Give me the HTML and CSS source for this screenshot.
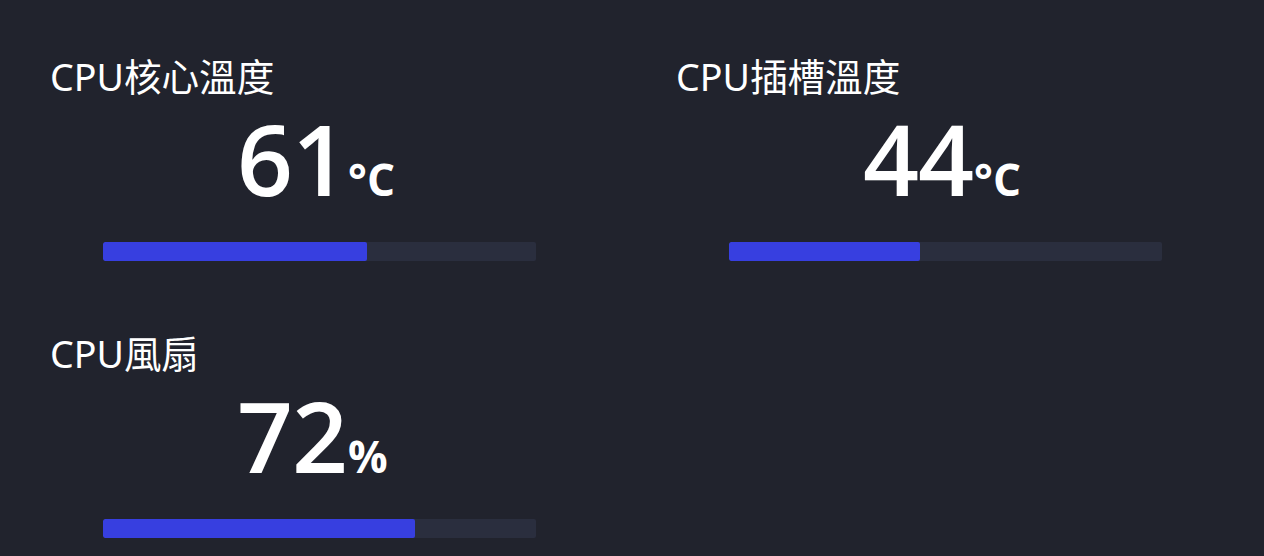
FILE: index.html
```html
<!DOCTYPE html>
<html lang="zh-Hant">
<head>
<meta charset="utf-8">
<title>CPU Monitor</title>
<link rel="stylesheet" href="styles.css">
</head>
<body>
<main class="grid">
  <section class="card">
    <h2 class="title">CPU核心溫度</h2>
    <div class="value"><span class="num">61</span><span class="unit">°C</span></div>
    <div class="track"><div class="fill" style="width:61%"></div></div>
  </section>
  <section class="card">
    <h2 class="title">CPU插槽溫度</h2>
    <div class="value"><span class="num">44</span><span class="unit">°C</span></div>
    <div class="track"><div class="fill" style="width:44%"></div></div>
  </section>
  <section class="card">
    <h2 class="title">CPU風扇</h2>
    <div class="value"><span class="num">72</span><span class="unit">%</span></div>
    <div class="track"><div class="fill" style="width:72%"></div></div>
  </section>
</main>
</body>
</html>
```
FILE: styles.css
```css
html, body {
  margin: 0;
  padding: 0;
  background: #21232d;
  height: 100%;
  overflow: hidden;
}

body {
  font-family: "Noto Sans", "Noto Sans CJK TC", sans-serif;
  color: #ffffff;
}

.grid {
  display: grid;
  grid-template-columns: 626px 626px;
  row-gap: 69px;
  padding: 53px 0 0 50px;
}

.card {
  display: flex;
  flex-direction: column;
}

.title {
  margin: 0;
  font-size: 37.6px;
  font-weight: 400;
  line-height: 48px;
  white-space: nowrap;
}

.value {
  margin-top: 8px;
  padding-left: 187px;
  display: flex;
  align-items: baseline;
  line-height: 98px;
  height: 98px;
}

.num {
  font-family: "Open Sans", "Noto Sans", sans-serif;
  font-size: 98px;
  font-weight: 600;
  letter-spacing: -1px;
}

.unit {
  font-family: "Open Sans", "Noto Sans", sans-serif;
  font-size: 44px;
  font-weight: 700;
  margin-left: 1px;
}

.track {
  margin-top: 35px;
  margin-left: 53px;
  width: 433px;
  height: 19px;
  background: #2a2e3e;
  border-radius: 2px;
  overflow: hidden;
}

.fill {
  height: 100%;
  background: #373fe0;
  border-radius: 2px;
}
```
